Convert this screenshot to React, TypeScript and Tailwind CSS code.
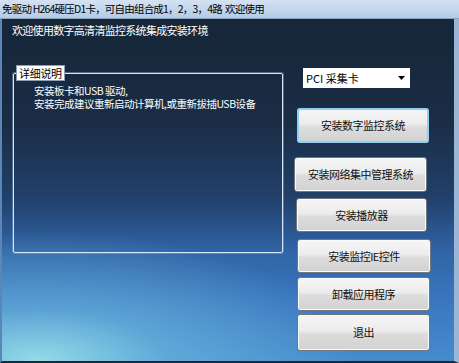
const FONT = "font-['Noto_Sans_CJK_SC','Noto_Sans',sans-serif]";

const buttons: { label: string; cls: string }[] = [
  { label: "安装数字监控系统", cls: "mt-[20px] ml-[3px] w-[132px] h-[35px] outline outline-2 outline-[#8fd0f0] -outline-offset-2" },
  { label: "安装网络集中管理系统", cls: "mt-[14px] ml-0 w-[133px] h-[35px]" },
  { label: "安装播放器", cls: "mt-[6px] ml-[2px] w-[131px] h-[34px]" },
  { label: "安装监控IE控件", cls: "mt-[7px] ml-[3px] w-[134px] h-[34px]" },
  { label: "卸载应用程序", cls: "mt-[4px] ml-[3px] w-[133px] h-[34px]" },
  { label: "退出", cls: "mt-[3px] ml-[3px] w-[133px] h-[37px]" },
];

function WinButton({ label, cls }: { label: string; cls: string }) {
  return (
    <button
      className={`${cls} flex items-center justify-center rounded-[3px] border border-[#6f7780] bg-[linear-gradient(to_bottom,#f6f6f6_0%,#ececec_45%,#dcdcdc_55%,#d2d2d2_100%)] text-[11px] leading-none text-[#111] tracking-[-0.5px] shadow-[inset_0_0_0_1px_#fbfbfb]`}
    >
      {label}
    </button>
  );
}

export default function App() {
  return (
    <div className={`${FONT} w-[459px] h-[363px] flex flex-col overflow-hidden bg-[#0e1a2a]`}>
      {/* title bar */}
      <div className="h-[19px] shrink-0 flex items-center pl-[2px] bg-[linear-gradient(to_bottom,#d4e2f2,#b3cbe6)] border-b border-[#8aa4c0] text-[10.5px] tracking-[-0.8px] leading-none text-black whitespace-nowrap">
        免驱动 H264硬压D1卡，可自由组合成1，2，3，4路&nbsp;&nbsp;欢迎使用
      </div>

      <div className="flex-1 flex border-r-[5px] border-r-[#9ab6d4] border-l-[2px] border-l-[#5a86b8] border-b-[2px] border-b-[#1c2838] bg-[radial-gradient(ellipse_70%_38%_at_8%_100%,#92dbe8_0%,rgba(120,200,230,0.5)_40%,rgba(80,150,210,0)_100%),linear-gradient(to_bottom,#172638_0%,#1a2d45_30%,#21406a_52%,#3064a6_68%,#3a76be_82%,#468ccd_100%)]">
        {/* left column */}
        <div className="w-[283px] shrink-0 pl-[10px] pt-[4px]">
          <div className="text-[11px] tracking-[-0.7px] leading-[14px] text-white whitespace-nowrap">欢迎使用数字高清清监控系统集成安装环境</div>
          <fieldset className="min-w-0 mt-[28px] ml-[1px] w-[270px] h-[188px] border border-[#d6e6f6] rounded-[2px] pl-[20px] pr-0 shadow-[0_0_0_1px_rgba(140,170,210,0.5)]">
            <legend className="ml-[-18px] bg-white px-[2px] text-[11px] tracking-[-0.3px] leading-[14px] text-black border border-[#8aa0b8]">
              详细说明
            </legend>
            <div className="mt-[3px] text-[10.5px] tracking-[-0.5px] leading-[13px] text-white whitespace-nowrap">
              <div>安装板卡和USB 驱动,</div>
              <div>安装完成建议重新启动计算机,或重新拔插USB设备</div>
            </div>
          </fieldset>
        </div>

        {/* right column */}
        <div className="flex flex-col pl-[9px] pt-[49px]">
          <div className="ml-[9px] w-[107px] h-[20px] bg-white flex items-center justify-between pl-[3px] pr-[5px] text-[11px] leading-none text-black">
            <span>PCI 采集卡</span>
            <svg width="7" height="4" viewBox="0 0 7 4">
              <path d="M0 0H7L3.5 4Z" fill="#000" />
            </svg>
          </div>
          {buttons.map((b) => (
            <WinButton key={b.label} label={b.label} cls={b.cls} />
          ))}
        </div>
      </div>
    </div>
  );
}
